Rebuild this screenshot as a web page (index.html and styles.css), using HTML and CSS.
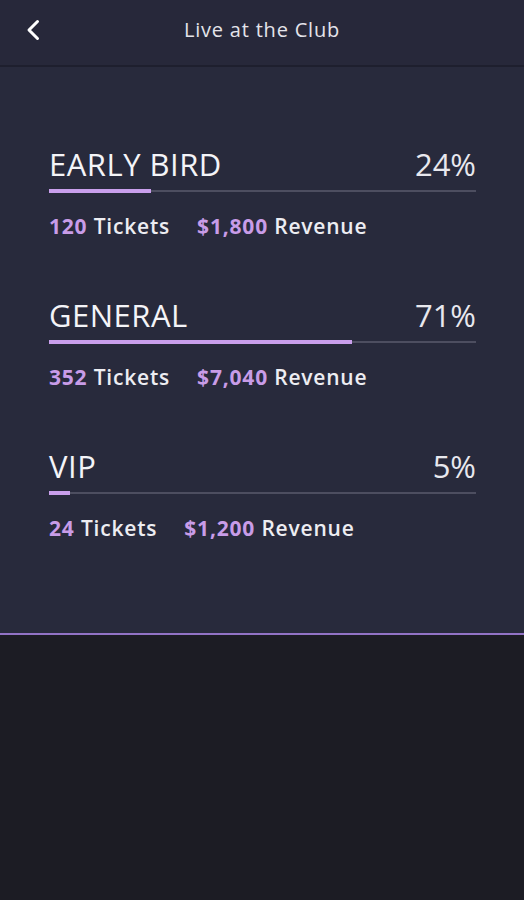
FILE: index.html
```html
<!DOCTYPE html>
<html lang="en">
<head>
  <meta charset="UTF-8">
  <meta name="viewport" content="width=device-width, initial-scale=1.0">
  <title>Live at the Club</title>
  <link rel="stylesheet" href="styles.css">
</head>
<body>
  <header class="topbar">
    <a class="back" href="#" aria-label="Back">
      <svg width="16" height="22" viewBox="0 0 16 22" fill="none">
        <path d="M12.5 2.5 L4 11 L12.5 19.5" stroke="#ffffff" stroke-width="3" stroke-linecap="round" stroke-linejoin="round"/>
      </svg>
    </a>
    <h1>Live at the Club</h1>
  </header>

  <main class="panel">
    <section class="tier">
      <div class="tier-head">
        <span class="tier-name">EARLY BIRD</span>
        <span class="tier-pct">24%</span>
      </div>
      <div class="track"><div class="fill" style="width: 24%"></div></div>
      <div class="stats">
        <span><b>120</b> Tickets</span>
        <span><b>$1,800</b> Revenue</span>
      </div>
    </section>

    <section class="tier">
      <div class="tier-head">
        <span class="tier-name">GENERAL</span>
        <span class="tier-pct">71%</span>
      </div>
      <div class="track"><div class="fill" style="width: 71%"></div></div>
      <div class="stats">
        <span><b>352</b> Tickets</span>
        <span><b>$7,040</b> Revenue</span>
      </div>
    </section>

    <section class="tier">
      <div class="tier-head">
        <span class="tier-name">VIP</span>
        <span class="tier-pct">5%</span>
      </div>
      <div class="track"><div class="fill" style="width: 5%"></div></div>
      <div class="stats">
        <span><b>24</b> Tickets</span>
        <span><b>$1,200</b> Revenue</span>
      </div>
    </section>
  </main>

  <div class="bottom"></div>
</body>
</html>
```

FILE: styles.css
```css
html, body {
  margin: 0;
  padding: 0;
}

body {
  font-family: "Open Sans", "Noto Sans", sans-serif;
  background: #1c1c24;
  color: #ececf2;
  width: 524px;
  height: 900px;
  display: flex;
  flex-direction: column;
}

.topbar {
  height: 67px;
  padding-bottom: 5px;
  box-sizing: border-box;
  background: #27283a;
  border-bottom: 2px solid #1e1f2e;
  display: flex;
  align-items: center;
  justify-content: center;
  position: relative;
  flex-shrink: 0;
}

.back {
  position: absolute;
  left: 25px;
  top: 19px;
  display: block;
  line-height: 0;
}

.topbar h1 {
  margin: 0;
  font-size: 20px;
  line-height: 28px;
  font-weight: 400;
  color: #e4e4ea;
  letter-spacing: 0.8px;
}

.panel {
  height: 568px;
  flex-shrink: 0;
  background: #282a3c;
  border-bottom: 2px solid #9273c6;
  padding: 77px 48px 0 49px;
  box-sizing: border-box;
  display: flex;
  flex-direction: column;
  gap: 55px;
}

.tier-head {
  display: flex;
  justify-content: space-between;
  align-items: baseline;
  height: 40px;
  line-height: 40px;
}

.tier-name {
  font-size: 31px;
  font-weight: 400;
  color: #f4f4f8;
  letter-spacing: 0.5px;
}

.tier-pct {
  font-size: 31px;
  font-weight: 400;
  color: #e8e8ee;
}

.track {
  height: 2px;
  background: #4d4e60;
  margin-top: 6px;
  position: relative;
}

.fill {
  position: absolute;
  left: 0;
  top: -1px;
  height: 4px;
  background: #c99fec;
}

.stats {
  display: flex;
  gap: 27px;
  margin-top: 20px;
  font-size: 21px;
  line-height: 28px;
  font-weight: 600;
  color: #ededf2;
  letter-spacing: 0.8px;
}

.stats b {
  font-weight: 700;
  color: #c89ce8;
}

.bottom {
  flex: 1;
  background: #1c1c24;
}
```
